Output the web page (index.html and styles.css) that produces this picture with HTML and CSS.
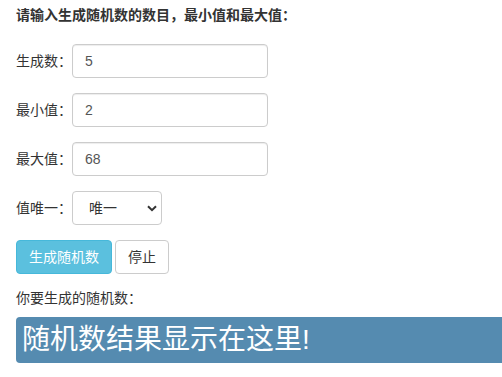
FILE: index.html
```html
<!DOCTYPE html>
<html lang="zh-CN">
<head>
<meta charset="utf-8">
<title>随机数</title>
<link rel="stylesheet" href="styles.css">
</head>
<body>
<div class="wrap">
  <h4 class="title">请输入生成随机数的数目，最小值和最大值：</h4>
  <div class="form-group">
    <label class="lbl">生成数：</label>
    <input class="ctrl" type="text" value="5">
  </div>
  <div class="form-group">
    <label class="lbl">最小值：</label>
    <input class="ctrl" type="text" value="2">
  </div>
  <div class="form-group">
    <label class="lbl">最大值：</label>
    <input class="ctrl" type="text" value="68">
  </div>
  <div class="form-group">
    <label class="lbl">值唯一：</label>
    <span class="sel-wrap">
      <select class="sel">
        <option>唯一</option>
        <option>不唯一</option>
      </select>
      <svg class="chev" width="10" height="7" viewBox="0 0 10 7"><path d="M1 1.2 L5 5.2 L9 1.2" fill="none" stroke="#333" stroke-width="2"/></svg>
    </span>
  </div>
  <div class="btns">
    <button class="btn btn-info">生成随机数</button>
    <button class="btn btn-default">停止</button>
  </div>
  <p class="out-label">你要生成的随机数：</p>
  <div class="result">随机数结果显示在这里!</div>
</div>
</body>
</html>
```

FILE: styles.css
```css
html, body {
  margin: 0;
  padding: 0;
  overflow: hidden;
  background: #fff;
}
body {
  font-family: "Liberation Sans", "Noto Sans CJK SC", sans-serif;
  font-size: 14px;
  line-height: 20px;
  color: #333;
}
.wrap {
  padding: 5px 16px 0 16px;
}
.title {
  margin: 0 0 19px 0;
  font-size: 14px;
  font-weight: bold;
  line-height: 20px;
}
.form-group {
  display: flex;
  align-items: center;
  margin-bottom: 15px;
}
.lbl {
  width: 56px;
  flex: none;
}
.ctrl {
  box-sizing: border-box;
  width: 196px;
  height: 34px;
  padding: 6px 12px;
  border: 1px solid #ccc;
  border-radius: 4px;
  font: inherit;
  color: #555;
  box-shadow: inset 0 1px 1px rgba(0,0,0,.075);
  outline: none;
}
.sel-wrap {
  position: relative;
  display: inline-block;
}
.sel {
  box-sizing: border-box;
  width: 90px;
  height: 34px;
  padding: 6px 12px 6px 16px;
  border: 1px solid #ccc;
  border-radius: 4px;
  background: #fff;
  font: inherit;
  color: #333;
  -webkit-appearance: none;
  appearance: none;
  outline: none;
}
.chev {
  position: absolute;
  left: 75px;
  top: 14px;
  pointer-events: none;
}
.btns {
  display: flex;
  gap: 3px;
}
.btn {
  box-sizing: border-box;
  height: 34px;
  padding: 6px 12px;
  border: 1px solid #ccc;
  border-radius: 4px;
  font: inherit;
  line-height: 20px;
  cursor: pointer;
}
.btn-info {
  background: #5bc0de;
  border-color: #46b8da;
  color: #fff;
}
.btn-default {
  background: #fff;
  color: #333;
}
.out-label {
  margin: 14px 0 9px 0;
}
.result {
  height: 46px;
  margin-right: -30px;
  padding: 0 6px;
  background: #558bb0;
  border-radius: 4px;
  color: #fff;
  font-size: 28px;
  line-height: 46px;
}
```
